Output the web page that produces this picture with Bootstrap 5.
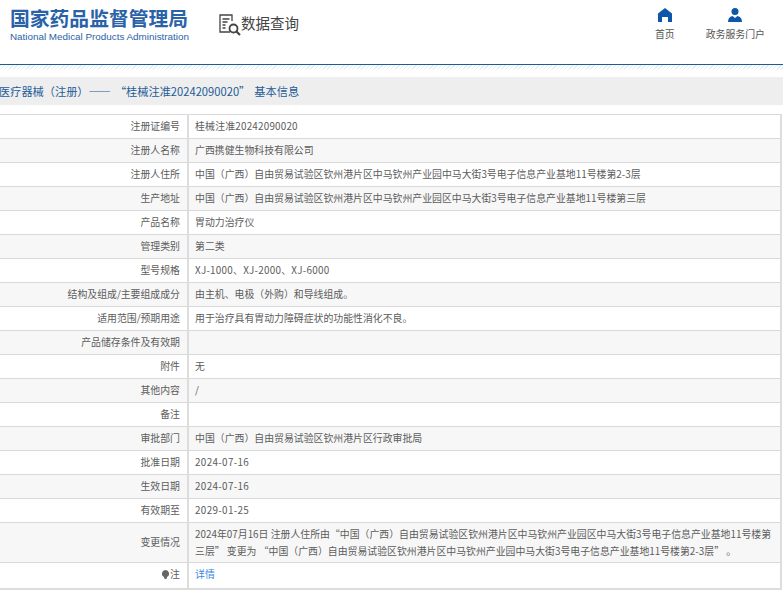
<!DOCTYPE html>
<html lang="zh-CN"><head><meta charset="utf-8">
<link rel="stylesheet" href="https://cdn.jsdelivr.net/npm/bootstrap@5.3.0/dist/css/bootstrap.min.css">
<style>
html,body{background:#fff;overflow:hidden}
body{font-family:"Noto Sans CJK SC","Liberation Sans",sans-serif;font-size:12px;color:#555}
.topbar{height:65px;border-bottom:1px solid #1e5c97;padding-left:10px;padding-right:18px}
.brand-cn{font-weight:700;font-size:19.8px;line-height:24px;color:#2a62a8;margin-top:6px;white-space:nowrap}
.brand-en{font-family:"Liberation Sans",sans-serif;font-size:9.85px;line-height:12px;color:#2a62a8;margin-top:1px;white-space:nowrap}
.query{margin-left:30px;margin-top:14px}
.query-txt{font-size:14.5px;line-height:20px;color:#444;margin-top:-1px}
.navi{color:#555;font-size:9.9px;line-height:14px;margin-top:8px}
.navi svg{display:block;margin:0 auto 5px}
.navi-one{margin-right:31px}
.stripes{height:12px;background:linear-gradient(#fff0 0,#fff0 3px,#fff 6px),repeating-linear-gradient(135deg,#e6edf0 0 1px,#fff 1px 3px)}
.crumb{height:28px;background:#eeeeee;color:#1e5c97;font-size:11.2px;line-height:28px;white-space:nowrap;text-indent:-1px;word-spacing:1.5px}
.info{width:782px;margin-top:9px;table-layout:fixed;border-collapse:collapse;border-top:1px solid #d9d9d9;border-bottom:2px solid #ddd;border-right:2px solid #ddd;font-size:9.9px;color:#5c5c5c}
.info td{border-bottom:1px solid #d9d9d9;padding:0 0 2px;height:24px;vertical-align:middle;line-height:14px}
.info tr:last-child td{border-bottom:0;height:26px}
.info tr:nth-child(even) td{background:#f7f7f7}
.info td.lbl{width:188px;text-align:right;padding-right:7px;border-right:2px solid #ddd}
.info td.val{padding-left:6px;padding-right:6px}
.info td.multi{line-height:17px;height:40px;padding-bottom:0}
.more{color:#3a87e0}
.pin{display:inline-block;vertical-align:-1px;margin-right:1px}
.num-a{letter-spacing:.35px}
.num-b{letter-spacing:.25px}
.num-c{letter-spacing:.2px}
</style></head><body>
<header class="topbar d-flex">
  <div>
    <div class="brand-cn">国家药品监督管理局</div>
    <div class="brand-en">National Medical Products Administration</div>
  </div>
  <div class="query d-flex align-items-start">
    <svg width="22" height="23" viewBox="0 0 22 23" fill="none" stroke="#444" stroke-width="1.300"><path d="M11 18H1V1h12v6"/><path d="M3.500 5h7M3.500 8h5M3.500 11h3M3.500 14h3"/><circle cx="14.500" cy="14.500" r="4" stroke-width="1.800"/><path d="M17.500 17.500l3.500 3.500" stroke-width="2.200"/></svg>
    <span class="query-txt">数据查询</span>
  </div>
  <div class="ms-auto d-flex">
    <div class="navi navi-one text-center"><svg width="14" height="14" viewBox="0 0 14 14" fill="#0d57a8"><path d="M7 0L0 5.500V14h4V9h6v5h4V5.500z"/></svg>首页</div>
    <div class="navi text-center"><svg width="14" height="14" viewBox="0 0 14 14" fill="#0d57a8"><circle cx="7" cy="3.500" r="3.500"/><path d="M0 14c0-3.500 1.500-5.500 4.500-6L7 10l2.500-2c3 .5 4.500 2.500 4.500 6z"/></svg>政务服务门户</div>
  </div>
</header>
<div class="stripes"></div>
<div class="crumb">医疗器械（注册）—— “桂械注准20242090020” 基本信息</div>
<table class="info">
<tbody>
<tr><td class="lbl">注册证编号</td><td class="val num-c">桂械注准20242090020</td></tr>
<tr><td class="lbl">注册人名称</td><td class="val">广西携健生物科技有限公司</td></tr>
<tr><td class="lbl">注册人住所</td><td class="val">中国（广西）自由贸易试验区钦州港片区中马钦州产业园中马大街3号电子信息产业基地11号楼第2-3层</td></tr>
<tr><td class="lbl">生产地址</td><td class="val">中国（广西）自由贸易试验区钦州港片区中马钦州产业园区中马大街3号电子信息产业基地11号楼第三层</td></tr>
<tr><td class="lbl">产品名称</td><td class="val">胃动力治疗仪</td></tr>
<tr><td class="lbl">管理类别</td><td class="val">第二类</td></tr>
<tr><td class="lbl">型号规格</td><td class="val num-b">XJ-1000、XJ-2000、XJ-6000</td></tr>
<tr><td class="lbl">结构及组成/主要组成成分</td><td class="val">由主机、电极（外购）和导线组成。</td></tr>
<tr><td class="lbl">适用范围/预期用途</td><td class="val">用于治疗具有胃动力障碍症状的功能性消化不良。</td></tr>
<tr><td class="lbl">产品储存条件及有效期</td><td class="val"></td></tr>
<tr><td class="lbl">附件</td><td class="val">无</td></tr>
<tr><td class="lbl">其他内容</td><td class="val">/</td></tr>
<tr><td class="lbl">备注</td><td class="val"></td></tr>
<tr><td class="lbl">审批部门</td><td class="val">中国（广西）自由贸易试验区钦州港片区行政审批局</td></tr>
<tr><td class="lbl">批准日期</td><td class="val num-a">2024-07-16</td></tr>
<tr><td class="lbl">生效日期</td><td class="val num-a">2024-07-16</td></tr>
<tr><td class="lbl">有效期至</td><td class="val num-a">2029-01-25</td></tr>
<tr><td class="lbl">变更情况</td><td class="val multi">2024年07月16日 注册人住所由“中国（广西）自由贸易试验区钦州港片区中马钦州产业园区中马大街3号电子信息产业基地11号楼第三层” 变更为 “中国（广西）自由贸易试验区钦州港片区中马钦州产业园中马大街3号电子信息产业基地11号楼第2-3层” 。</td></tr>
<tr><td class="lbl"><svg class="pin" width="7" height="9" viewBox="0 0 8 10" fill="#666"><path d="M4 0a4 4 0 0 1 2 7.500L5 10H3L2 7.500A4 4 0 0 1 4 0z"/></svg>注</td><td class="val more">详情</td></tr>
</tbody></table>
<script src="https://cdn.jsdelivr.net/npm/bootstrap@5.3.0/dist/js/bootstrap.bundle.min.js"></script>
</body></html>
